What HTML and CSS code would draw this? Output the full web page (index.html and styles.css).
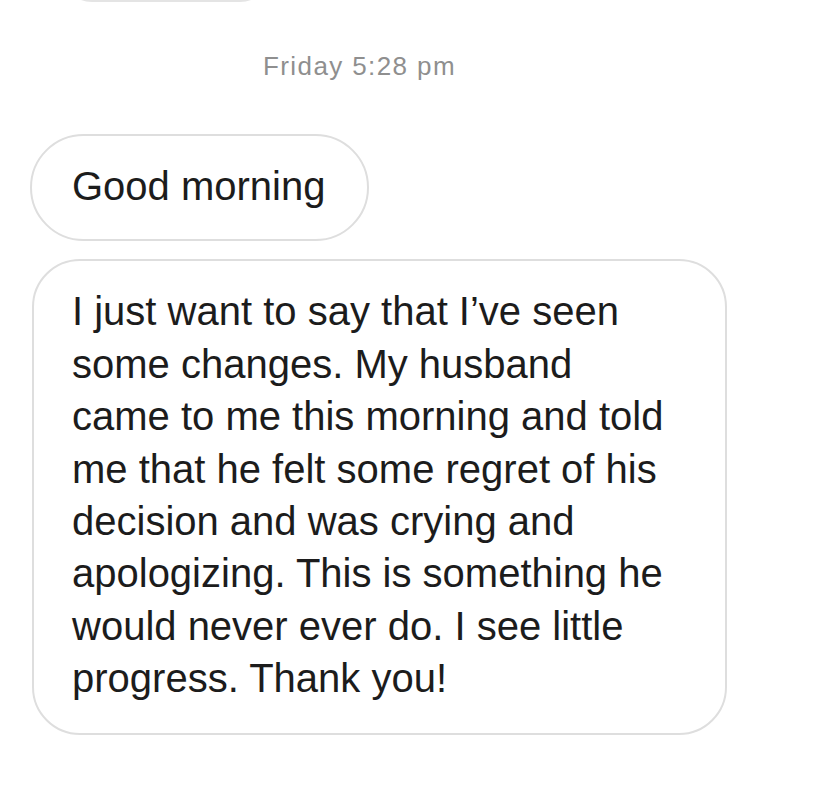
FILE: index.html
```html
<!DOCTYPE html>
<html lang="en">
<head>
<meta charset="utf-8">
<title>Messages</title>
<link rel="stylesheet" href="styles.css">
</head>
<body>
<div class="thread">
  <div class="bubble prev"></div>
  <div class="time">Friday 5:28 pm</div>
  <div class="row"><div class="bubble short">Good morning</div></div>
  <div class="bubble long">I just want to say that I’ve seen<br>some changes. My husband<br>came to me this morning and told<br>me that he felt some regret of his<br>decision and was crying and<br>apologizing. This is something he<br>would never ever do. I see little<br>progress. Thank you!</div>
</div>
</body>
</html>
```
FILE: styles.css
```css
html, body {
  margin: 0;
  padding: 0;
  background: #ffffff;
}
body {
  font-family: "Liberation Sans", Arial, sans-serif;
  color: #1c1c1c;
  overflow: hidden;
}
.thread {
  padding-left: 30px;
  display: flex;
  flex-direction: column;
  align-items: flex-start;
}
.bubble {
  box-sizing: border-box;
  border: 2px solid #dedede;
  background: #ffffff;
  font-size: 40px;
  line-height: 52.4px;
  white-space: nowrap;
}
.prev {
  width: 208px;
  height: 60px;
  margin-top: -58px;
  margin-left: 32px;
  border-radius: 30px;
  border-color: #e4e4e4;
}
.time {
  margin-top: 49px;
  margin-left: 233px;
  font-size: 26px;
  line-height: 30px;
  letter-spacing: 1.4px;
  color: #8f8f8f;
}
.row {
  margin-top: 53px;
  display: flex;
}
.short {
  padding: 24px 42px 27px 40px;
  border-radius: 54px;
}
.long {
  margin-top: 18px;
  margin-left: 2px;
  width: 695px;
  padding: 24px 20px 28px 38px;
  border-radius: 48px;
}
```
